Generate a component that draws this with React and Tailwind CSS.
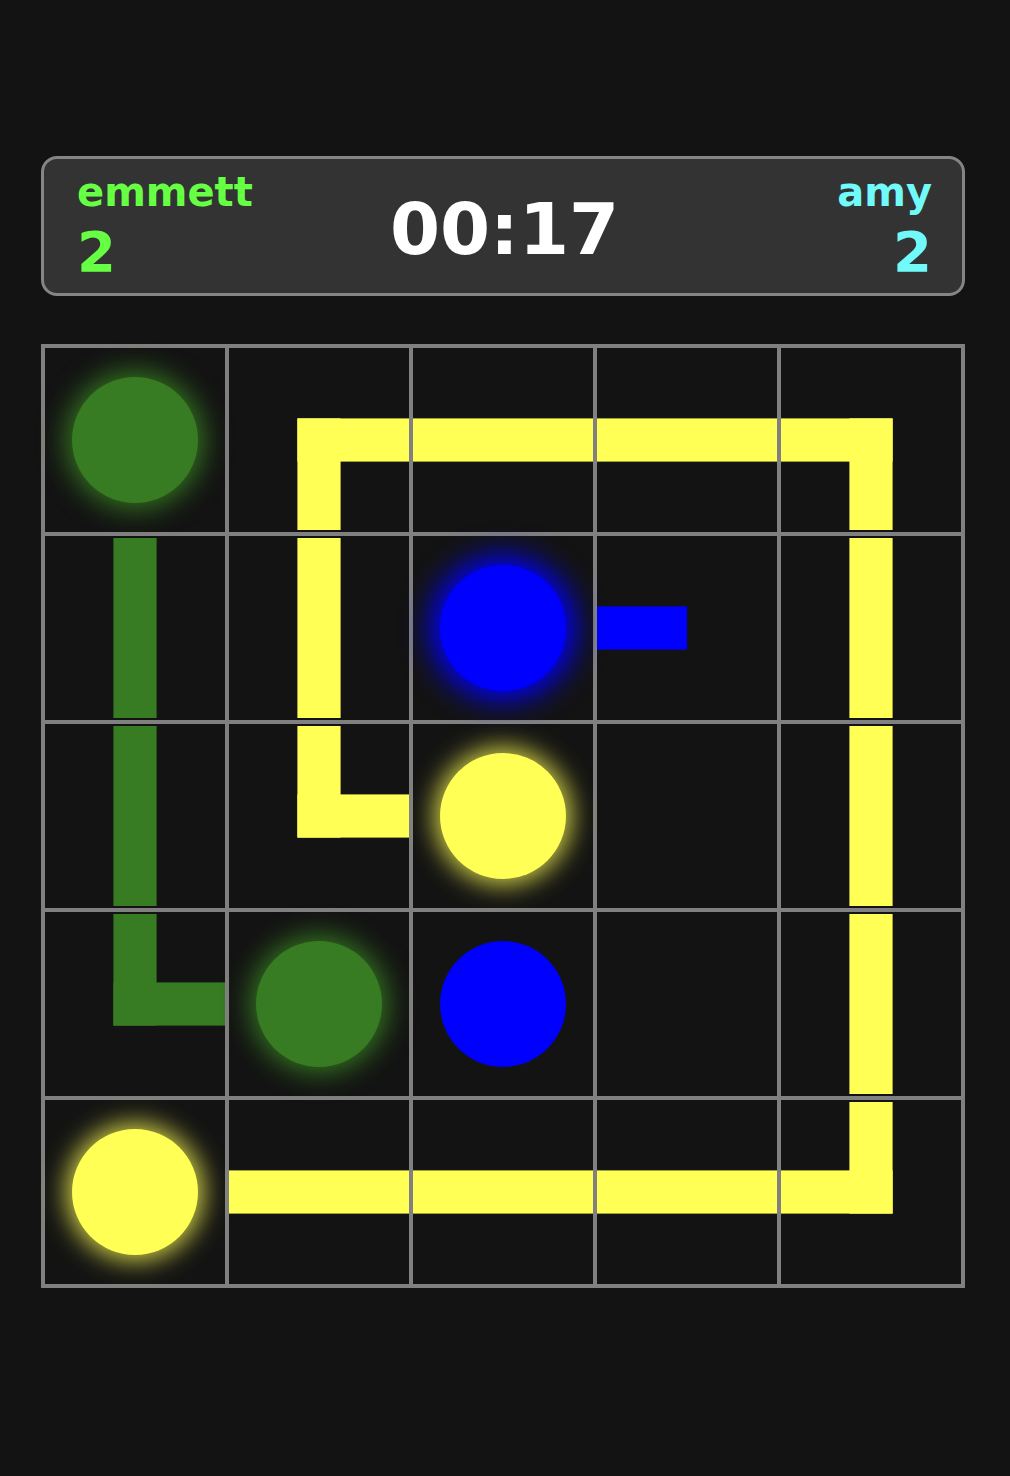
import React from 'react';

const GREEN = '#377b22';
const YELLOW = '#ffff55';
const BLUE = '#0000ff';

// pipe pieces inside a 180x180 cell box, pipe is 43.2 thick
const PIECES = {
    v: [[68.4, 0, 43.2, 180]],
    h: [[0, 68.4, 180, 43.2]],
    rb: [[68.4, 68.4, 111.6, 43.2], [68.4, 68.4, 43.2, 111.6]],
    lb: [[0, 68.4, 111.6, 43.2], [68.4, 68.4, 43.2, 111.6]],
    tr: [[68.4, 0, 43.2, 111.6], [68.4, 68.4, 111.6, 43.2]],
    tl: [[68.4, 0, 43.2, 111.6], [0, 68.4, 111.6, 43.2]],
    l: [[0, 68.4, 90, 43.2]],
};

const DOTS = {
    green: { bg: 'bg-[#377b22]', glow: 'shadow-[0_0_28px_5px_#377b22]' },
    yellow: { bg: 'bg-[#ffff55]', glow: 'shadow-[0_0_26px_5px_#d8d84a]' },
    blue: { bg: 'bg-[#0000ff]', glow: 'shadow-[0_0_30px_9px_#0000ff]' },
};

const board = [
    [{ dot: 'green', glow: true }, { pipe: 'rb', color: YELLOW }, { pipe: 'h', color: YELLOW }, { pipe: 'h', color: YELLOW }, { pipe: 'lb', color: YELLOW }],
    [{ pipe: 'v', color: GREEN }, { pipe: 'v', color: YELLOW }, { dot: 'blue', glow: true }, { pipe: 'l', color: BLUE }, { pipe: 'v', color: YELLOW }],
    [{ pipe: 'v', color: GREEN }, { pipe: 'tr', color: YELLOW }, { dot: 'yellow', glow: true }, {}, { pipe: 'v', color: YELLOW }],
    [{ pipe: 'tr', color: GREEN }, { dot: 'green', glow: true }, { dot: 'blue' }, {}, { pipe: 'v', color: YELLOW }],
    [{ dot: 'yellow', glow: true }, { pipe: 'h', color: YELLOW }, { pipe: 'h', color: YELLOW }, { pipe: 'h', color: YELLOW }, { pipe: 'tl', color: YELLOW }],
];

const font = { fontFamily: '"DejaVu Sans", Verdana, sans-serif' };

const Cell = ({ cell }) => {
    return (
        <div className="border-2 border-[#808080] h-[188px] flex items-center justify-center">
            {cell.dot && (
                <div className={`w-[126px] h-[126px] rounded-full ${DOTS[cell.dot].bg} ${cell.glow ? DOTS[cell.dot].glow : ''}`} />
            )}
            {cell.pipe && (
                <svg width="180" height="180" viewBox="0 0 180 180" className="block">
                    {PIECES[cell.pipe].map(([x, y, w, h], i) => (
                        <rect key={i} x={x} y={y} width={w} height={h} fill={cell.color} />
                    ))}
                </svg>
            )}
        </div>
    );
};

const App = () => {
    return (
        <div className="bg-[#131313] min-h-screen pt-[156px] pl-[41px] font-bold" style={font}>
            <div className="w-[924px]">
                {/* Score bar */}
                <div className="h-[140px] bg-[#333333] border-[3px] border-[#858585] rounded-[16px] pl-[33px] pr-[30px] flex items-center justify-between">
                    <div className="w-[220px] flex flex-col gap-[12px]">
                        <div className="text-[40px] leading-none text-[#66ff44]">emmett</div>
                        <div className="text-[56px] leading-none text-[#66ff44]">2</div>
                    </div>
                    <div className="text-[72px] leading-none text-white mt-[6px]">00:17</div>
                    <div className="w-[220px] flex flex-col items-end gap-[12px]">
                        <div className="text-[40px] leading-none text-[#70fafa]">amy</div>
                        <div className="text-[56px] leading-none text-[#70fafa]">2</div>
                    </div>
                </div>

                {/* Board */}
                <div className="mt-[48px] border-2 border-[#808080] grid grid-cols-5">
                    {board.map((row, r) =>
                        row.map((cell, c) => <Cell key={`${r}-${c}`} cell={cell} />)
                    )}
                </div>
            </div>
        </div>
    );
};

export default App;
